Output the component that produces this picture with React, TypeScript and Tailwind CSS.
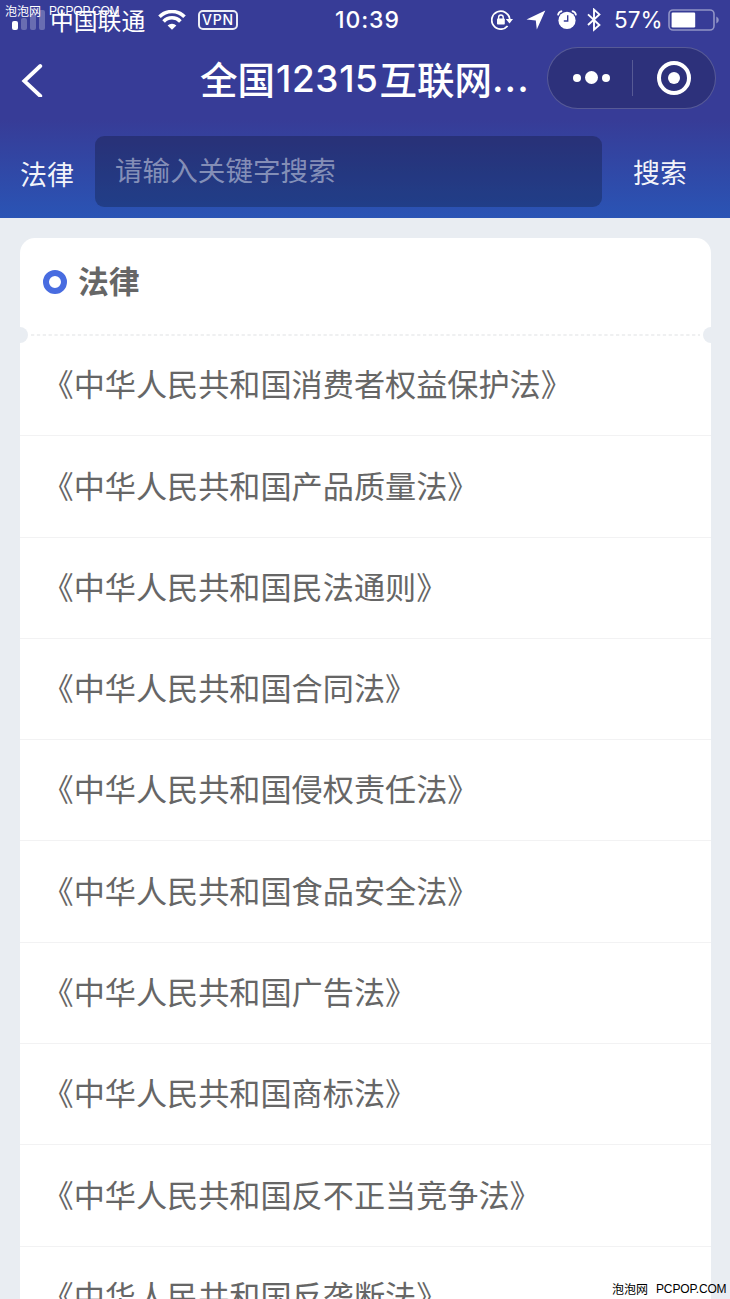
const LAWS = [
  "《中华人民共和国消费者权益保护法》",
  "《中华人民共和国产品质量法》",
  "《中华人民共和国民法通则》",
  "《中华人民共和国合同法》",
  "《中华人民共和国侵权责任法》",
  "《中华人民共和国食品安全法》",
  "《中华人民共和国广告法》",
  "《中华人民共和国商标法》",
  "《中华人民共和国反不正当竞争法》",
  "《中华人民共和国反垄断法》",
];

function WifiIcon() {
  return (
    <svg width="28" height="20" viewBox="0 0 28 20" fill="none" stroke="#fff" strokeWidth="3.6">
      <path d="M1.5 6.8 A17.5 17.5 0 0 1 26.5 6.8" />
      <path d="M5.6 11.4 A11.5 11.5 0 0 1 22.4 11.4" />
      <path d="M9.6 15.6 A6.4 6.4 0 0 1 18.4 15.6 L14 19.8 Z" fill="#fff" stroke="none" />
    </svg>
  );
}

function RotationLockIcon() {
  return (
    <svg width="22" height="20" viewBox="0 0 22 20" fill="none" stroke="#fff" strokeWidth="1.8">
      <path d="M16.6 16 A9 9 0 1 1 18.7 9" />
      <path d="M14.8 9 H22 L18.5 13.4 Z" fill="#fff" stroke="none" />
      <path d="M7.6 9 V7.3 A2.3 2.3 0 0 1 12.2 7.3 V9" strokeWidth="1.4" />
      <rect x="6" y="8.6" width="7.8" height="6" rx="0.8" fill="#fff" stroke="none" />
    </svg>
  );
}

function LocationIcon() {
  return (
    <svg width="20" height="20" viewBox="0 0 20 20" fill="#fff">
      <path d="M19.3 0.6 L10.8 19.4 L9.8 10.4 L0.5 9.5 Z" />
    </svg>
  );
}

function AlarmIcon() {
  return (
    <svg width="20" height="20" viewBox="0 0 20 20" fill="none">
      <circle cx="10" cy="10.4" r="8.6" fill="#fff" />
      <path d="M1 5.4 A5 5 0 0 1 5.2 1.1 M19 5.4 A5 5 0 0 0 14.8 1.1" stroke="#fff" strokeWidth="1.8" />
      <path d="M10.7 5.2 V11 H6.8" stroke="#373c97" strokeWidth="1.4" />
    </svg>
  );
}

function BluetoothIcon() {
  return (
    <svg width="14" height="24" viewBox="0 0 14 24" fill="none" stroke="#fff" strokeWidth="1.9">
      <path d="M1 6.4 L12.4 17 L7 21.6 V1.6 L12.4 6.4 L1 17" />
    </svg>
  );
}

function BatteryIcon() {
  return (
    <svg width="52" height="22" viewBox="0 0 52 22">
      <rect x="1" y="1" width="45" height="20" rx="4" fill="none" stroke="#9194c6" strokeWidth="1.6" />
      <rect x="3.6" y="3.6" width="23.6" height="14.8" rx="1.2" fill="#fff" />
      <path d="M48.3 7.5 Q50.8 8.8 50.8 11 Q50.8 13.2 48.3 14.5 Z" fill="#9194c6" />
    </svg>
  );
}

function StatusBar() {
  return (
    <div className="flex h-10 items-center text-white">
      <div className="flex w-[335px] items-center pl-3">
        <div className="flex h-5 items-end gap-[3px]">
          <div className="h-[9px] w-[6px] rounded-[2px] bg-white" />
          <div className="h-[12px] w-[6px] rounded-[2px] bg-white/25" />
          <div className="h-[16px] w-[6px] rounded-[2px] bg-white/25" />
          <div className="h-[20px] w-[6px] rounded-[2px] bg-white/25" />
        </div>
        <span className="mb-px ml-[5px] w-[96px] whitespace-nowrap text-[23.8px] leading-9">中国联通</span>
        <div className="ml-3">
          <WifiIcon />
        </div>
        <div className="ml-3 flex h-5 w-[40px] items-center justify-center rounded-[5px] border-2 border-white/90 font-['Inter','Liberation_Sans',sans-serif] text-[14px] leading-none font-medium tracking-[0.8px]">
          VPN
        </div>
      </div>
      <span className="w-[156px] font-['Inter','Liberation_Sans',sans-serif] text-[23px] font-medium tracking-[0.9px]">
        10:39
      </span>
      <RotationLockIcon />
      <div className="ml-[13px]">
        <LocationIcon />
      </div>
      <div className="ml-[11px]">
        <AlarmIcon />
      </div>
      <div className="ml-[10px]">
        <BluetoothIcon />
      </div>
      <span className="ml-[13px] w-[54px] font-['Inter','Liberation_Sans',sans-serif] text-[22.5px]">57%</span>
      <BatteryIcon />
    </div>
  );
}

function TitleBar() {
  return (
    <div className="flex h-[77px] items-center pb-0.5 text-white">
      <svg className="ml-5" width="24" height="38" viewBox="0 0 24 38" fill="none" stroke="#fff" strokeWidth="3.8" strokeLinecap="round">
        <path d="M20.3 7 L4.3 22 L20.3 37" />
      </svg>
      <h1 className="ml-[156px] flex w-[347px] items-center whitespace-nowrap text-[37.5px] leading-[75px] font-medium">
        <span>全国</span>
        <span className="ml-px w-[103.5px] pt-px font-['Inter','Liberation_Sans',sans-serif] text-[37px] tracking-[0.6px]">12315</span>
        <span>互联网</span>
        <span className="pt-px font-['Inter','Liberation_Sans',sans-serif] text-[38px] tracking-[1.1px]">...</span>
      </h1>
      <div className="flex h-[62px] w-[169px] items-center rounded-full border border-white/20 bg-black/18">
        <div className="flex w-[84px] items-center justify-center gap-[4px] pl-0.5">
          <div className="size-2 rounded-full bg-white" />
          <div className="size-[13px] rounded-full bg-white" />
          <div className="size-2 rounded-full bg-white" />
        </div>
        <div className="h-9 w-px bg-white/20" />
        <div className="flex flex-1 items-center justify-center">
          <div className="flex size-[34px] items-center justify-center rounded-full border-4 border-white">
            <div className="size-3 rounded-full bg-white" />
          </div>
        </div>
      </div>
    </div>
  );
}

function SearchBar() {
  return (
    <div className="flex h-[101px] items-center pt-[19px] pb-[11px] text-[27px] text-white/95">
      <span className="w-[95px] pt-1.5 pl-5">法律</span>
      <div className="flex h-[71px] w-[507px] items-center rounded-[9px] bg-black/23 pb-[3px] pl-5 text-[27.6px] text-white/45">
        请输入关键字搜索
      </div>
      <span className="pt-0.5 pl-[31px]">搜索</span>
    </div>
  );
}

export default function App() {
  return (
    <div className="relative h-[1299px] w-[730px] overflow-hidden bg-[#e9edf2] font-['Noto_Sans_CJK_SC',sans-serif]">
      <header className="h-[218px] bg-[linear-gradient(180deg,#373c97_0px,#373c97_120px,#2a54b5_218px)]">
        <StatusBar />
        <TitleBar />
        <SearchBar />
      </header>

      <main className="mx-[19.5px] mt-5 h-[1100px] overflow-hidden rounded-t-[15px] bg-white text-[#666]">
        <div className="flex h-[91px] items-center pb-[3px] pl-[23px]">
          <div className="size-6 rounded-full border-[6px] border-[#486ce0]" />
          <h2 className="mb-[3px] ml-[11.5px] text-[30.8px] leading-none font-bold">法律</h2>
        </div>

        {/* ticket-style divider with side notches */}
        <div className="-mx-2 flex h-3 items-center">
          <div className="h-4 w-4 shrink-0 rounded-full bg-[#e9edf2]" />
          <svg className="mx-[3px] h-[2px] flex-1">
            <line x1="0" y1="1" x2="100%" y2="1" stroke="#eaebed" strokeWidth="1.4" strokeDasharray="3.3 2.55" />
          </svg>
          <div className="h-4 w-4 shrink-0 rounded-full bg-[#e9edf2]" />
        </div>

        <ul className="-mt-[6px]">
          {LAWS.map(law => (
            <li
              key={law}
              className="flex h-[101.3px] items-center border-b-[1.5px] border-[#f2f2f3] pb-[3px] pl-[23px] text-[31.15px] whitespace-nowrap"
            >
              {law}
            </li>
          ))}
        </ul>
      </main>

      {/* site watermarks */}
      <div className="absolute top-[5px] left-[5px] flex gap-2 text-[12px] leading-3 whitespace-nowrap text-white">
        <span>泡泡网</span>
        <span className="font-['Liberation_Sans',sans-serif] tracking-[-0.15px]">PCPOP.COM</span>
      </div>
      <div className="absolute top-[1283px] left-[612px] flex gap-2 text-[12px] leading-3 whitespace-nowrap text-black">
        <span>泡泡网</span>
        <span className="font-['Liberation_Sans',sans-serif] tracking-[-0.15px]">PCPOP.COM</span>
      </div>
    </div>
  );
}
